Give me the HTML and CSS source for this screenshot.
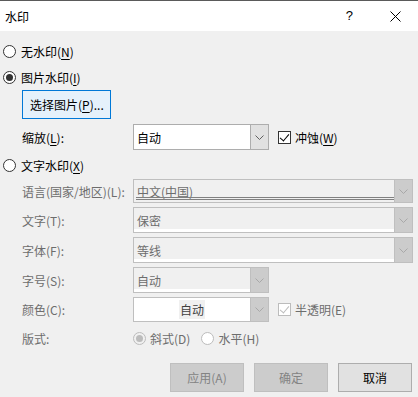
FILE: index.html
```html
<!DOCTYPE html>
<html lang="zh-CN">

<head>
    <meta charset="UTF-8">
    <title>水印</title>
    <link rel="stylesheet" href="styles.css">
</head>

<body>
    <div class="dialog">
        <div class="titlebar">
            <span class="title">水印</span>
            <span class="help">?</span>
            <svg class="close" width="11" height="11" viewBox="0 0 11 11">
                <path d="M0.5 0.5 L10.5 10.5 M10.5 0.5 L0.5 10.5" stroke="#000" stroke-width="1" fill="none"/>
            </svg>
        </div>

        <div class="content">
            <div class="radio-row">
                <span class="radio"></span>
                <span>无水印(<u>N</u>)</span>
            </div>
            <div class="radio-row second">
                <span class="radio checked"></span>
                <span>图片水印(<u>I</u>)</span>
            </div>

            <button class="pick">选择图片(<u>P</u>)...</button>

            <div class="form-row scale">
                <label>缩放(<u>L</u>):</label>
                <div class="select short">
                    <span class="val">自动</span>
                    <span class="arrow">
                        <svg width="9" height="5" viewBox="0 0 9 5"><polyline points="0.5,0.5 4.5,4.5 8.5,0.5" fill="none" stroke="#606060"/></svg>
                    </span>
                </div>
                <span class="check on"></span>
                <span>冲蚀(<u>W</u>)</span>
            </div>

            <div class="radio-row third">
                <span class="radio"></span>
                <span>文字水印(<u>X</u>)</span>
            </div>

            <div class="form-row off h24">
                <label>语言(国家/地区)(L):</label>
                <div class="select long disabled">
                    <span class="val lined">中文(中国)</span>
                    <span class="arrow">
                        <svg width="9" height="5" viewBox="0 0 9 5"><polyline points="0.5,0.5 4.5,4.5 8.5,0.5" fill="none" stroke="#a8a8a8"/></svg>
                    </span>
                </div>
            </div>
            <div class="form-row off">
                <label>文字(T):</label>
                <div class="select long disabled">
                    <span class="val strip">保密</span>
                    <span class="arrow">
                        <svg width="9" height="5" viewBox="0 0 9 5"><polyline points="0.5,0.5 4.5,4.5 8.5,0.5" fill="none" stroke="#a8a8a8"/></svg>
                    </span>
                </div>
            </div>
            <div class="form-row off">
                <label>字体(F):</label>
                <div class="select long disabled">
                    <span class="val strip">等线</span>
                    <span class="arrow">
                        <svg width="9" height="5" viewBox="0 0 9 5"><polyline points="0.5,0.5 4.5,4.5 8.5,0.5" fill="none" stroke="#a8a8a8"/></svg>
                    </span>
                </div>
            </div>
            <div class="form-row off">
                <label>字号(S):</label>
                <div class="select short disabled">
                    <span class="val strip">自动</span>
                    <span class="arrow">
                        <svg width="9" height="5" viewBox="0 0 9 5"><polyline points="0.5,0.5 4.5,4.5 8.5,0.5" fill="none" stroke="#a8a8a8"/></svg>
                    </span>
                </div>
            </div>
            <div class="form-row off h25">
                <label>颜色(C):</label>
                <div class="select short disabled white">
                    <span class="val center"><span class="hl">自动</span></span>
                    <span class="arrow">
                        <svg width="9" height="5" viewBox="0 0 9 5"><polyline points="0.5,0.5 4.5,4.5 8.5,0.5" fill="none" stroke="#a8a8a8"/></svg>
                    </span>
                </div>
                <span class="check on dim"></span>
                <span>半透明(E)</span>
            </div>
            <div class="form-row off h24">
                <label>版式:</label>
                <span class="radio checked dim"></span>
                <span class="opt">斜式(D)</span>
                <span class="radio dim"></span>
                <span class="opt">水平(H)</span>
            </div>

            <div class="button-group">
                <button class="btn" disabled>应用(A)</button>
                <button class="btn" disabled>确定</button>
                <button class="btn cancel">取消</button>
            </div>
        </div>
    </div>
</body>

</html>
```

FILE: styles.css
```css
body {
    margin: 0;
    font-family: "Noto Sans CJK SC", "Noto Sans", sans-serif;
    font-size: 12px;
    color: #000;
    background: #f0f0f0;
}

.dialog {
    width: 418px;
    height: 397px;
    border-top: 1px solid #5a5a5a;
    box-sizing: border-box;
    background: #f0f0f0;
    overflow: hidden;
}

.titlebar {
    height: 30px;
    background: #fff;
    display: flex;
    align-items: center;
    padding-left: 5px;
}

.title {
    flex: 1;
    font-size: 12px;
}

.help {
    font-family: "Liberation Sans", sans-serif;
    font-size: 13px;
    margin-right: 37px;
    margin-top: -1px;
}

.close {
    margin-right: 17px;
}

.content {
    padding-top: 10px;
}

u {
    text-decoration-thickness: 1px;
    text-underline-offset: 2px;
}

/* radios */
.radio-row {
    height: 20px;
    display: flex;
    align-items: center;
    gap: 5px;
    padding-left: 3px;
}

.radio-row.second {
    margin-top: 6px;
}

.radio-row.third {
    margin-top: 5px;
}

.radio {
    width: 13px;
    height: 13px;
    box-sizing: border-box;
    border: 1px solid #333;
    border-radius: 50%;
    background: #fff;
    display: flex;
    align-items: center;
    justify-content: center;
    flex-shrink: 0;
}

.radio.checked::after {
    content: "";
    width: 7px;
    height: 7px;
    border-radius: 50%;
    background: #333;
}

.radio.dim {
    border-color: #bcbcbc;
}

.radio.checked.dim {
    background: #f0f0f0;
}

.radio.checked.dim::after {
    background: #bcbcbc;
}

/* picture button */
.pick {
    display: block;
    margin: 3px 0 0 22px;
    width: 89px;
    height: 29px;
    padding: 0 0 0 7px;
    text-align: left;
    font-family: inherit;
    font-size: 12px;
    color: #000;
    background: #e5f1fb;
    border: 1px solid #0078d7;
    box-sizing: border-box;
}

/* form rows */
.form-row {
    height: 26px;
    margin-top: 4px;
    display: flex;
    align-items: center;
    padding-left: 22px;
}

.form-row.scale {
    margin-top: 5px;
}

.form-row.h24 {
    height: 24px;
}

.form-row.h25 {
    height: 25px;
}

.form-row label {
    width: 111px;
    flex-shrink: 0;
}

.form-row.off {
    color: #6d6d6d;
}

.select {
    height: 100%;
    display: flex;
    box-sizing: border-box;
    border: 1px solid #adadad;
    background: #fff;
}

.select.short {
    width: 136px;
}

.select.long {
    width: 280px;
}

.select .val {
    flex: 1;
    display: flex;
    align-items: center;
    padding-left: 3px;
}

.select .arrow {
    width: 17px;
    display: flex;
    align-items: center;
    justify-content: center;
    background: #e1e1e1;
    border-left: 1px solid #adadad;
}

.select.disabled {
    border-color: #bfbfbf;
    background: #f0f0f0;
}

.select.disabled .arrow {
    background: #cccccc;
    border-left-color: #bfbfbf;
}

.select.white {
    background: #fff;
}

.val.strip {
    box-shadow: inset 0 -3px 0 #fff;
}

.val.lined {
    position: relative;
}

.val.lined::after {
    content: "";
    position: absolute;
    left: 2px;
    right: 0;
    bottom: 2px;
    height: 3px;
    border-top: 1px solid #808080;
    border-bottom: 1px solid #808080;
    box-sizing: border-box;
}

.select .val.center {
    justify-content: center;
    padding-left: 0;
}

.hl {
    background: #f0f0f0;
    color: #404040;
    padding: 1px 1px;
}

/* checkbox */
.check {
    width: 13px;
    height: 13px;
    box-sizing: border-box;
    border: 1px solid #333;
    background: #fff;
    margin: 0 4px 0 9px;
    position: relative;
    flex-shrink: 0;
}

.check.on::after {
    content: "";
    position: absolute;
    left: 3px;
    top: 0px;
    width: 4px;
    height: 8px;
    border-right: 1px solid #000;
    border-bottom: 1px solid #000;
    transform: rotate(40deg);
}

.check.dim {
    border-color: #bcbcbc;
}

.check.dim::after {
    border-color: #bcbcbc;
}

.opt {
    margin-left: 4px;
    margin-right: 11px;
}

/* bottom buttons */
.button-group {
    display: flex;
    justify-content: flex-end;
    gap: 10px;
    padding-right: 6px;
    margin-top: 13px;
}

.btn {
    width: 74px;
    height: 29px;
    font-family: inherit;
    font-size: 12px;
    box-sizing: border-box;
    border: 1px solid #bfbfbf;
    background: #cccccc;
    color: #838383;
    padding: 0;
}

.btn.cancel {
    border-color: #adadad;
    background: #e1e1e1;
    color: #000;
}
```
